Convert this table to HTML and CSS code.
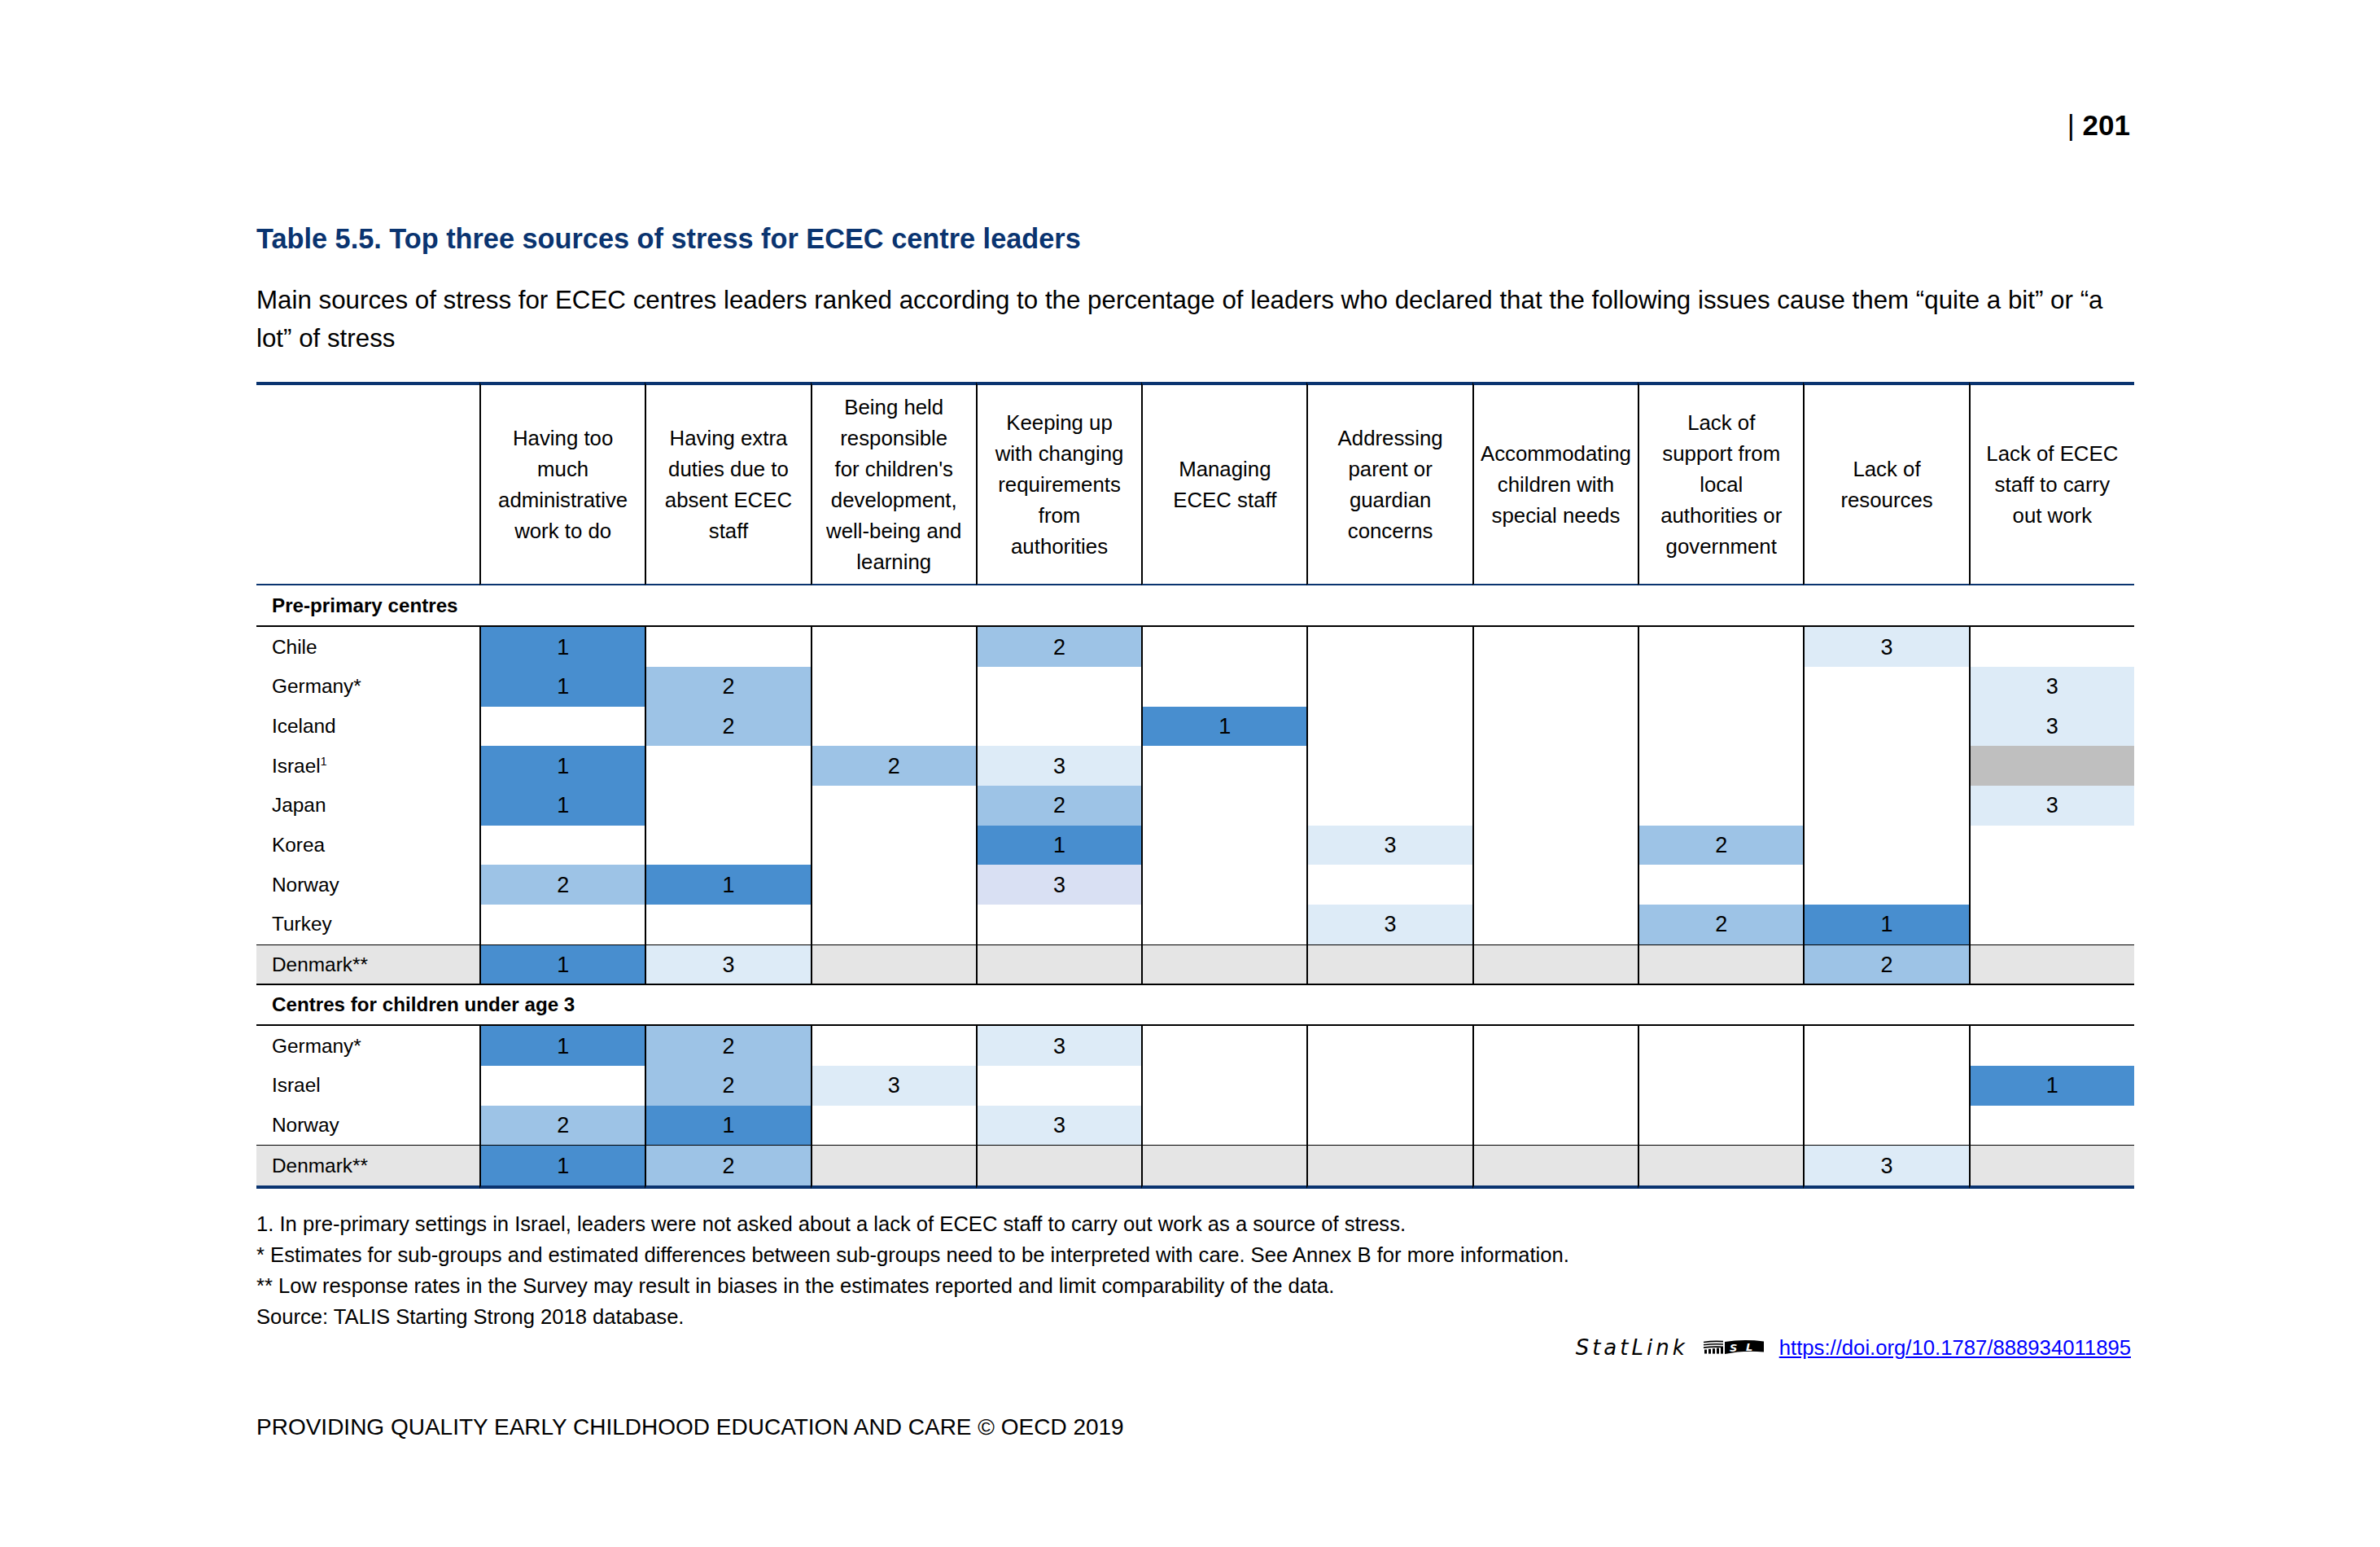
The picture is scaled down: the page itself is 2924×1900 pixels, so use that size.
FILE: index.html
```html
<!DOCTYPE html>
<html lang="en">
<head>
<meta charset="utf-8">
<title>Table 5.5. Top three sources of stress for ECEC centre leaders</title>
<link rel="stylesheet" href="styles.css">
</head>
<body>
<div class="page">
  <div class="folio"><span class="bar">|</span> <span class="num">201</span></div>
  <h1 class="title">Table 5.5. Top three sources of stress for ECEC centre leaders</h1>
  <p class="subtitle">Main sources of stress for ECEC centres leaders ranked according to the percentage of leaders who declared that the following issues cause them “quite a bit” or “a<br>lot” of stress</p>

  <table class="stress">
    <colgroup>
      <col class="col-name">
      <col class="col-item"><col class="col-item"><col class="col-item"><col class="col-item"><col class="col-item">
      <col class="col-item"><col class="col-item"><col class="col-item"><col class="col-item"><col class="col-item">
    </colgroup>
    <thead>
      <tr class="head">
        <th></th>
        <th>Having too<br>much<br>administrative<br>work to do</th>
        <th>Having extra<br>duties due to<br>absent ECEC<br>staff</th>
        <th>Being held<br>responsible<br>for children's<br>development,<br>well-being and<br>learning</th>
        <th>Keeping up<br>with changing<br>requirements<br>from<br>authorities</th>
        <th>Managing<br>ECEC staff</th>
        <th>Addressing<br>parent or<br>guardian<br>concerns</th>
        <th>Accommodating<br>children with<br>special needs</th>
        <th>Lack of<br>support from<br>local<br>authorities or<br>government</th>
        <th>Lack of<br>resources</th>
        <th>Lack of ECEC<br>staff to carry<br>out work</th>
      </tr>
    </thead>
    <tbody>
      <tr class="section"><td colspan="11">Pre-primary centres</td></tr>
      <tr class="row">
        <td class="name">Chile</td>
        <td class="cell r1">1</td><td class="cell"></td><td class="cell"></td><td class="cell r2">2</td><td class="cell"></td>
        <td class="cell"></td><td class="cell"></td><td class="cell"></td><td class="cell r3">3</td><td class="cell last"></td>
      </tr>
      <tr class="row">
        <td class="name">Germany*</td>
        <td class="cell r1">1</td><td class="cell r2">2</td><td class="cell"></td><td class="cell"></td><td class="cell"></td>
        <td class="cell"></td><td class="cell"></td><td class="cell"></td><td class="cell"></td><td class="cell last r3">3</td>
      </tr>
      <tr class="row">
        <td class="name">Iceland</td>
        <td class="cell"></td><td class="cell r2">2</td><td class="cell"></td><td class="cell"></td><td class="cell r1">1</td>
        <td class="cell"></td><td class="cell"></td><td class="cell"></td><td class="cell"></td><td class="cell last r3">3</td>
      </tr>
      <tr class="row">
        <td class="name">Israel<sup>1</sup></td>
        <td class="cell r1">1</td><td class="cell"></td><td class="cell r2">2</td><td class="cell r3">3</td><td class="cell"></td>
        <td class="cell"></td><td class="cell"></td><td class="cell"></td><td class="cell"></td><td class="cell last na"></td>
      </tr>
      <tr class="row">
        <td class="name">Japan</td>
        <td class="cell r1">1</td><td class="cell"></td><td class="cell"></td><td class="cell r2">2</td><td class="cell"></td>
        <td class="cell"></td><td class="cell"></td><td class="cell"></td><td class="cell"></td><td class="cell last r3">3</td>
      </tr>
      <tr class="row">
        <td class="name">Korea</td>
        <td class="cell"></td><td class="cell"></td><td class="cell"></td><td class="cell r1">1</td><td class="cell"></td>
        <td class="cell r3">3</td><td class="cell"></td><td class="cell r2">2</td><td class="cell"></td><td class="cell last"></td>
      </tr>
      <tr class="row">
        <td class="name">Norway</td>
        <td class="cell r2">2</td><td class="cell r1">1</td><td class="cell"></td><td class="cell lav">3</td><td class="cell"></td>
        <td class="cell"></td><td class="cell"></td><td class="cell"></td><td class="cell"></td><td class="cell last"></td>
      </tr>
      <tr class="row">
        <td class="name">Turkey</td>
        <td class="cell"></td><td class="cell"></td><td class="cell"></td><td class="cell"></td><td class="cell"></td>
        <td class="cell r3">3</td><td class="cell"></td><td class="cell r2">2</td><td class="cell r1">1</td><td class="cell last"></td>
      </tr>
      <tr class="row dk">
        <td class="name">Denmark**</td>
        <td class="cell r1">1</td><td class="cell r3">3</td><td class="cell"></td><td class="cell"></td><td class="cell"></td>
        <td class="cell"></td><td class="cell"></td><td class="cell"></td><td class="cell r2">2</td><td class="cell last"></td>
      </tr>
      <tr class="section next"><td colspan="11">Centres for children under age 3</td></tr>
      <tr class="row">
        <td class="name">Germany*</td>
        <td class="cell r1">1</td><td class="cell r2">2</td><td class="cell"></td><td class="cell r3">3</td><td class="cell"></td>
        <td class="cell"></td><td class="cell"></td><td class="cell"></td><td class="cell"></td><td class="cell last"></td>
      </tr>
      <tr class="row">
        <td class="name">Israel</td>
        <td class="cell"></td><td class="cell r2">2</td><td class="cell r3">3</td><td class="cell"></td><td class="cell"></td>
        <td class="cell"></td><td class="cell"></td><td class="cell"></td><td class="cell"></td><td class="cell last r1">1</td>
      </tr>
      <tr class="row">
        <td class="name">Norway</td>
        <td class="cell r2">2</td><td class="cell r1">1</td><td class="cell"></td><td class="cell r3">3</td><td class="cell"></td>
        <td class="cell"></td><td class="cell"></td><td class="cell"></td><td class="cell"></td><td class="cell last"></td>
      </tr>
      <tr class="row dk end">
        <td class="name">Denmark**</td>
        <td class="cell r1">1</td><td class="cell r2">2</td><td class="cell"></td><td class="cell"></td><td class="cell"></td>
        <td class="cell"></td><td class="cell"></td><td class="cell"></td><td class="cell r3">3</td><td class="cell last"></td>
      </tr>
    </tbody>
  </table>

  <div class="notes">
    <p>1. In pre-primary settings in Israel, leaders were not asked about a lack of ECEC staff to carry out work as a source of stress.</p>
    <p>* Estimates for sub-groups and estimated differences between sub-groups need to be interpreted with care. See Annex B for more information.</p>
    <p>** Low response rates in the Survey may result in biases in the estimates reported and limit comparability of the data.</p>
    <p>Source: TALIS Starting Strong 2018 database.</p>
    <div class="statlink">
      <span class="statlink-name">StatLink</span>
      <svg class="statlink-logo" width="76" height="20" viewBox="0 0 76 20" aria-hidden="true">
        <path d="M1 3.5 Q12 1.8 25 2.6" stroke="#000" stroke-width="1.6" fill="none"/>
        <path d="M1 6.8 Q12 5.2 25 6" stroke="#000" stroke-width="1.6" fill="none"/>
        <path d="M1 10.1 Q12 8.6 25 9.4" stroke="#000" stroke-width="1.6" fill="none"/>
        <rect x="2" y="12.5" width="3" height="5" fill="#000"/>
        <rect x="7" y="11.8" width="3" height="5.8" fill="#000"/>
        <rect x="12" y="11.2" width="3" height="6.4" fill="#000"/>
        <rect x="17" y="10.6" width="3" height="7" fill="#000"/>
        <rect x="22" y="10" width="3" height="7.6" fill="#000"/>
        <path d="M27 3 Q50 -0.5 75 2.5 L75 15.5 Q50 13 27 18 Z" fill="#000"/>
        <text x="33" y="15" class="logo-letter">S</text>
        <text x="53" y="14" class="logo-letter">L</text>
      </svg>
      <a class="statlink-url" href="https://doi.org/10.1787/888934011895">https://doi.org/10.1787/888934011895</a>
    </div>
  </div>

  <div class="footer">PROVIDING QUALITY EARLY CHILDHOOD EDUCATION AND CARE © OECD 2019</div>
</div>
</body>
</html>
```

FILE: styles.css
```css
* { box-sizing: border-box; }

html, body {
  margin: 0;
  padding: 0;
  background: #ffffff;
}

body {
  font-family: "Liberation Sans", Arial, sans-serif;
  color: #000000;
}

.page {
  width: 2622px;
  padding: 134px 0 0 315px;
}

.folio {
  font-size: 35px;
  line-height: 40px;
  text-align: right;
  padding-right: 5px;
}

.folio .num { font-weight: 700; }

.title {
  margin: 94px 0 0;
  font-size: 34.3px;
  line-height: 50px;
  font-weight: 700;
  color: #0a3470;
}

.subtitle {
  margin: 28px 0 0;
  font-size: 31.3px;
  line-height: 46.6px;
}

/* table */
.stress {
  margin-top: 30px;
  width: 2307px;
  table-layout: fixed;
  border-collapse: separate;
  border-spacing: 0;
}

.col-name { width: 274px; }
.col-item { width: 203.3px; }

.stress th,
.stress td {
  padding: 0;
  text-align: center;
  vertical-align: middle;
  font-weight: 400;
}

.stress .head { height: 250px; }

.stress .head th {
  border-top: 4px solid #0a3470;
  border-bottom: 2px solid #0a3470;
  font-size: 25.8px;
  line-height: 38px;
  white-space: nowrap;
}

.stress .head th + th { border-left: 2px solid #000; }

.stress .section { height: 51px; }
.stress .section.next { height: 52px; }

.stress .section td {
  text-align: left;
  padding-left: 19px;
  font-size: 24.2px;
  font-weight: 700;
  border-bottom: 2px solid #000;
}

.stress .section.next td { border-top: 2px solid #000; }

.stress .row { height: 48.7px; }

.stress .row td { font-size: 24.4px; line-height: 30px; }

.stress .row td.cell { font-size: 27px; }

.stress .name {
  text-align: left;
  padding-left: 19px;
  white-space: nowrap;
}

.stress .name sup {
  font-size: 14px;
  line-height: 0;
  vertical-align: 9px;
}

.stress .cell { border-left: 2px solid #000; }

.stress .dk td {
  background: #e5e5e5;
  border-top: 1px solid #000;
}

.stress .dk.end { height: 54px; }
.stress .dk.end td { border-bottom: 4px solid #0a3470; }

.stress .r1, .stress .dk .r1 { background: #488ecf; }
.stress .r2, .stress .dk .r2 { background: #9dc3e6; }
.stress .r3, .stress .dk .r3 { background: #ddebf7; }
.stress .lav { background: #d9e0f3; }
.stress .na { background: #bfbfbf; }

/* notes */
.notes {
  margin-top: 24px;
  width: 2307px;
  font-size: 25.6px;
  line-height: 38px;
}

.notes p { margin: 0; }

.statlink {
  display: flex;
  justify-content: flex-end;
  align-items: center;
  height: 38px;
  padding-right: 4px;
}

.statlink-name {
  font-family: "DejaVu Sans", sans-serif;
  font-style: oblique;
  font-size: 26px;
  letter-spacing: 4px;
  margin-right: 18px;
}

.statlink-logo { margin-right: 18px; }

.logo-letter {
  font-family: "DejaVu Sans", sans-serif;
  font-weight: 700;
  font-style: oblique;
  font-size: 13px;
  fill: #ffffff;
}

.statlink-url {
  color: #0000ff;
  text-decoration: underline;
  font-size: 25.7px;
}

.footer {
  margin-top: 61px;
  font-size: 28px;
  line-height: 36px;
}
```
